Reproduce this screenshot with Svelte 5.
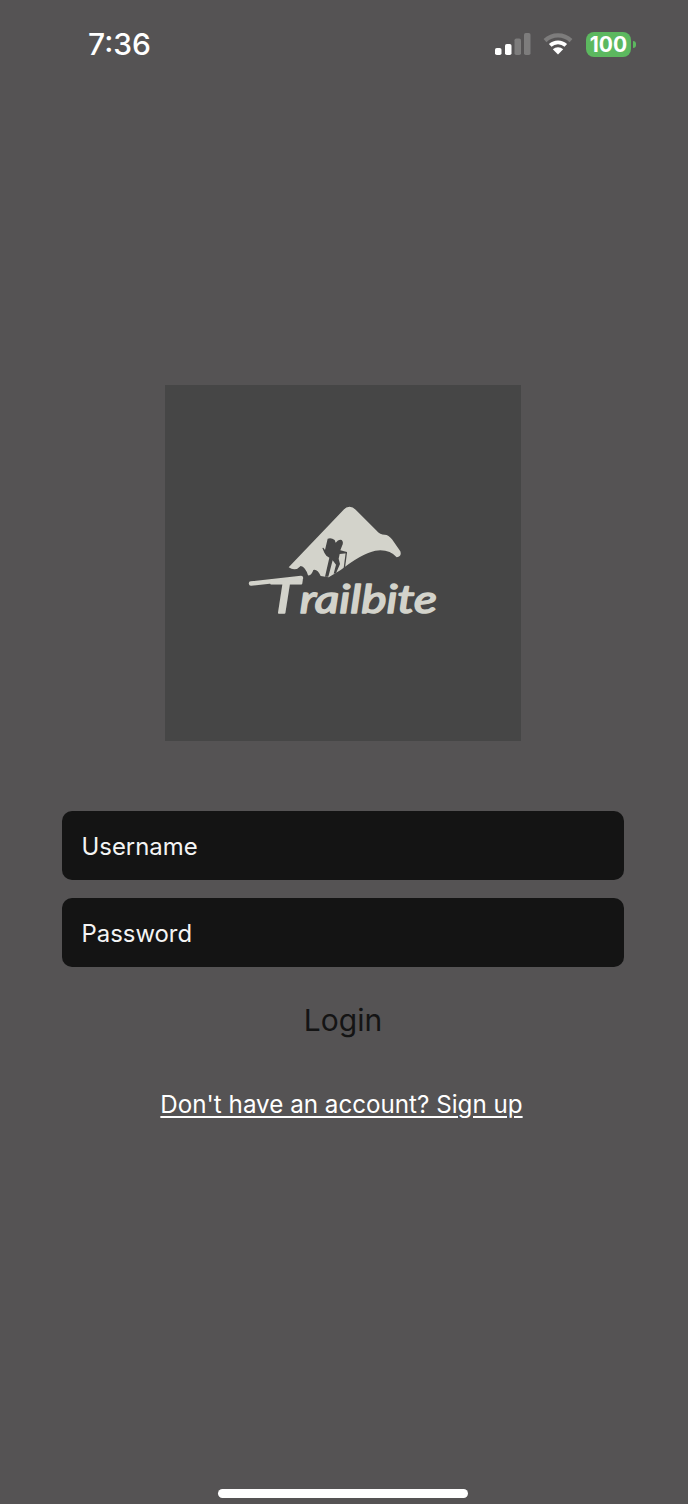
<script>
  const username = '';
  const password = '';
</script>

<div class="page">
  <header class="status">
    <span class="time">7:36</span>
    <div class="indicators">
      <svg class="signal" width="36" height="22" viewBox="0 0 36 22" aria-hidden="true">
        <rect x="0" y="15" width="6.5" height="7" rx="1.8" fill="#fff" />
        <rect x="10" y="11" width="6.5" height="11" rx="1.8" fill="#fff" />
        <rect x="19.5" y="5.5" width="6.5" height="16.5" rx="1.8" fill="#7d7c7c" />
        <rect x="29" y="0" width="6.5" height="22" rx="1.8" fill="#7d7c7c" />
      </svg>
      <svg class="wifi" width="30" height="23" viewBox="0 0 30 23" aria-hidden="true">
        <path d="M2 8.6 A19 19 0 0 1 28 8.6" fill="none" stroke="#7d7c7c" stroke-width="4.2" />
        <path d="M7.2 13.4 A11.5 11.5 0 0 1 22.8 13.4" fill="none" stroke="#fff" stroke-width="3.8" />
        <path d="M15 22.5 L9.8 17.3 A7.5 7.5 0 0 1 20.2 17.3 Z" fill="#fff" />
      </svg>
      <div class="battery">
        <span class="cell">100</span>
        <span class="nub"></span>
      </div>
    </div>
  </header>

  <main class="content">
    <div class="logo">
      <svg width="356" height="356" viewBox="165 385 356 356" role="img" aria-label="Trailbite logo">
        <g transform="translate(230 490) scale(0.33333)">
          <path
            fill="#d3d3cb"
            d="M176 232 L338 62 Q358 38 380 62 L440 122 Q450 134 464 134 Q476 134 486 148 L511 184 Q516 200 500 202 Q478 176 436 182 Q396 190 332 240 L296 262 L272 258 Q262 236 250 240 Q244 258 234 256 Q226 230 212 228 Q196 246 176 232 Z"
          />
          <path
            fill="#454545"
            d="M293 146 Q304 142 314 150 L317 158 Q326 146 335 150 Q342 156 336 168 L331 181 L351 186 L351 190 L329 192 L326 206 L330 222 L318 250 L311 251 L318 224 L308 211 L295 260 L285 260 L298 203 L289 197 L283 188 L277 174 L280 173 L285 180 Z"
          />
          <path fill="#454545" d="M347 188 L351 188 L345 234 L341 234 Z" />
        </g>
        <line class="swash" x1="251" y1="583.5" x2="301" y2="578" />
        <text class="wordmark" x="268" y="613" textLength="169" lengthAdjust="spacingAndGlyphs">
          <tspan class="cap">T</tspan>railbite
        </text>
      </svg>
    </div>

    <form class="form">
      <input class="field" type="text" placeholder="Username" value={username} />
      <input class="field" type="password" placeholder="Password" value={password} />
      <button class="login" type="button">Login</button>
      <a class="signup" href="#signup">Don't have an account? Sign up</a>
    </form>
  </main>

  <div class="home"></div>
</div>

<style>
  :global(body) {
    margin: 0;
    background: #555354;
  }

  .page {
    display: flex;
    flex-direction: column;
    width: 688px;
    height: 1504px;
    background: #555354;
    font-family: Inter, "Liberation Sans", sans-serif;
    overflow: hidden;
  }

  .status {
    display: flex;
    justify-content: space-between;
    align-items: flex-start;
    height: 88px;
    box-sizing: border-box;
    padding: 26px 52px 0 88px;
    color: #fff;
  }

  .time {
    font-size: 30px;
    font-weight: 550;
    line-height: 36px;
    letter-spacing: 0;
  }

  .indicators {
    display: flex;
    align-items: flex-start;
    padding-top: 6px;
  }

  .signal {
    display: block;
    margin: 1px 0 0 -1px;
  }

  .wifi {
    display: block;
    margin: 0 0 0 12px;
  }

  .battery {
    display: flex;
    align-items: center;
    margin-left: 13px;
  }

  .cell {
    display: block;
    width: 45px;
    height: 25px;
    border-radius: 8px;
    background: #5cb85f;
    color: #fff;
    font-size: 21px;
    font-weight: 700;
    line-height: 25px;
    text-align: center;
  }

  .nub {
    display: block;
    width: 3px;
    height: 7px;
    margin-left: 2px;
    border-radius: 0 3px 3px 0;
    background: #5cb85f;
  }

  .content {
    display: flex;
    flex-direction: column;
    align-items: center;
    flex: 1;
    padding: 297px 64px 0 62px;
  }

  .logo {
    width: 356px;
    height: 356px;
    background: #464646;
  }

  .logo svg {
    display: block;
  }

  .swash {
    stroke: #d3d3cb;
    stroke-width: 4.4;
    stroke-linecap: round;
  }

  .wordmark {
    fill: #d3d3cb;
    stroke: #d3d3cb;
    stroke-width: 1.6;
    stroke-linejoin: round;
    font-family: Lato, sans-serif;
    font-size: 38px;
    font-style: italic;
    font-weight: 400;
  }

  .cap {
    font-size: 46px;
  }

  .form {
    display: flex;
    flex-direction: column;
    align-items: center;
    align-self: stretch;
    margin-top: 70px;
  }

  .field {
    display: block;
    width: 100%;
    height: 69px;
    box-sizing: border-box;
    margin-bottom: 18px;
    padding: 1px 19.5px 0;
    border: 0;
    border-radius: 10px;
    outline: 0;
    background: #141414;
    color: #fff;
    font: 400 23.9px Inter, "Liberation Sans", sans-serif;
  }

  .field::placeholder {
    color: #f4f4f4;
    opacity: 1;
  }

  .login {
    margin-top: 13px;
    padding: 0;
    border: 0;
    background: none;
    color: #141414;
    font: 400 30px/44px Inter, "Liberation Sans", sans-serif;
  }

  .signup {
    margin: 45px 3px 0 0;
    color: #fff;
    font-size: 24.2px;
    line-height: 36px;
    text-decoration: underline;
    text-underline-offset: 3px;
  }

  .home {
    align-self: flex-start;
    width: 250px;
    height: 9px;
    margin: 0 0 6px 218px;
    border-radius: 5px;
    background: #fff;
  }
</style>
